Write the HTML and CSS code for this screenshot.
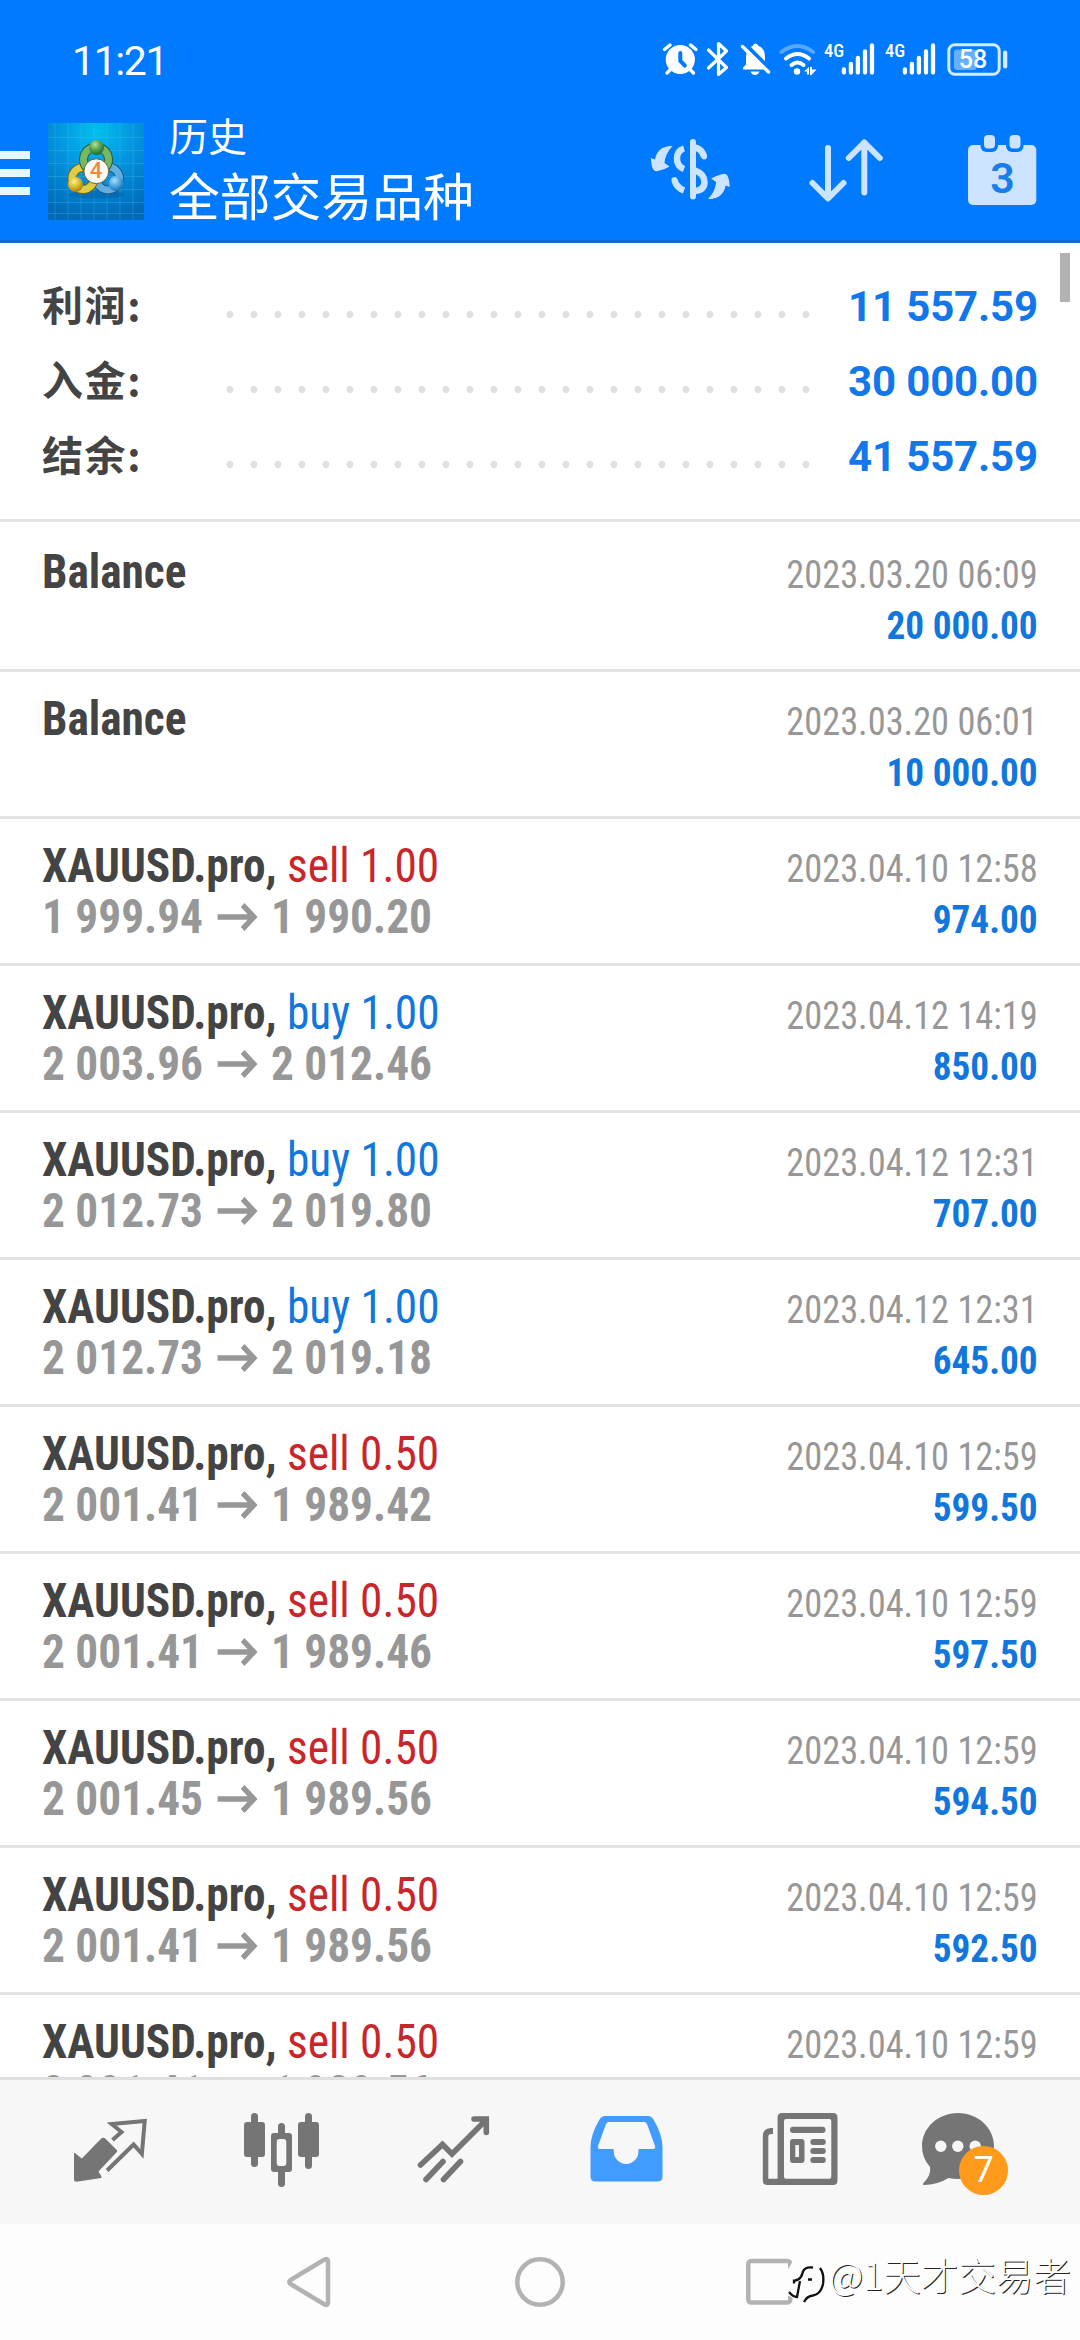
FILE: index.html
```html
<!DOCTYPE html>
<html lang="zh-CN">
<head>
<meta charset="utf-8">
<title>历史</title>
<link rel="stylesheet" href="styles.css">
</head>
<body>
<div class="screen">
  <header class="header">
    <div class="status">
      <span class="clock">11:21</span>
      <div class="status-icons">
        <svg width="44" height="44" viewBox="658 38 44 44"><circle cx="680.3" cy="59.5" r="14.6" fill="#fff"/><path d="M664.500 49.500l5.500-4.500M696 49.500l-5.500-4.500M670 70l-3 3M690.500 70l3 3" stroke="#fff" stroke-width="3.400" stroke-linecap="round"/><path d="M680.300 53v8l4.500 4.500" stroke="#007aff" stroke-width="4" fill="none" stroke-linecap="round"/></svg>
        <svg width="32" height="44" viewBox="702 38 32 44"><path d="M708.500 50l18 17.500-8 7v-31l8 7.500-18 17" fill="none" stroke="#fff" stroke-width="3.200" stroke-linejoin="round" stroke-linecap="round"/></svg>
        <svg width="42" height="44" viewBox="734 38 42 44"><path d="M743 69.500v-2l3-3v-7q0-9.500 6.500-11.500 1-2.500 3-2.500t3 2.500q6.500 2 6.500 11.500v7l4 5z" fill="#fff"/><path d="M750.500 71.500h9q-1.500 3.500-4.500 3.500t-4.500-3.500z" fill="#fff"/><path d="M744.500 43.500l25.500 25.500" stroke="#007aff" stroke-width="4"/><path d="M742.500 46.500l26 25.500" stroke="#fff" stroke-width="3.400" stroke-linecap="round"/></svg>
        <svg width="44" height="44" viewBox="776 38 44 44"><g fill="none" stroke="#fff" stroke-linecap="round" stroke-width="4"><path d="M781.500 52q16-12 31.500 0" opacity=".35"/><path d="M786 58.500q11.500-9 23 0"/><path d="M791.500 65q6-5 12 0"/></g><circle cx="797" cy="71.500" r="3.200" fill="#fff"/><path d="M804 71.500l5-4.500v7.500h-2v-3zM810 67h2v2.500h4.500l-5 5.500h-1.500z" fill="#fff"/></svg>
        <div class="signal"><span class="net">4G</span><svg width="61" height="44" viewBox="820 38 61 44"><path d="M843.900 69.500v3M850.900 64v8.500M857.900 58v14.500M865 51.500v21M872 45.500v27" stroke="#fff" stroke-width="4.300" stroke-linecap="round"/></svg></div>
        <div class="signal"><span class="net">4G</span><svg width="61" height="44" viewBox="820 38 61 44"><path d="M843.900 69.500v3M850.900 64v8.500M857.900 58v14.500M865 51.500v21M872 45.500v27" stroke="#fff" stroke-width="4.300" stroke-linecap="round"/></svg></div>
        <div class="battery"><svg width="70" height="44" viewBox="942 38 70 44"><rect x="948.800" y="44.800" width="50.400" height="29.400" rx="6" fill="none" stroke="#d6ebff" stroke-width="3"/><rect x="954" y="49.500" width="22.500" height="20.500" rx="3" fill="#66afff"/><rect x="1003" y="50.500" width="4.300" height="18" rx="2" fill="#d6ebff"/></svg><span class="level">58</span></div>
      </div>
    </div>
    <div class="toolbar">
      <svg class="menu" width="48" height="100" viewBox="0 123 48 100"><path d="M0 151h30v8H0zM0 169h30v8H0zM0 187h30v8H0z" fill="#e6f8ff"/></svg>
      <div class="logo">
        <svg width="96" height="97" viewBox="48 122.500 96 97">
          <defs>
            <radialGradient id="sky" cx=".5" cy=".1" r=".9"><stop offset="0" stop-color="#00c0ef"/><stop offset=".45" stop-color="#0494df"/><stop offset="1" stop-color="#006ab8"/></radialGradient>
            <radialGradient id="gr" cx=".4" cy=".3" r=".8"><stop offset="0" stop-color="#b5df9c"/><stop offset=".5" stop-color="#4d9f4b"/><stop offset="1" stop-color="#155d2b"/></radialGradient>
            <radialGradient id="ye" cx=".4" cy=".3" r=".8"><stop offset="0" stop-color="#fff48a"/><stop offset=".6" stop-color="#cba91e"/><stop offset="1" stop-color="#8d6d0c"/></radialGradient>
            <radialGradient id="bl" cx=".4" cy=".3" r=".8"><stop offset="0" stop-color="#a6dcfa"/><stop offset=".6" stop-color="#3d97d4"/><stop offset="1" stop-color="#165c9d"/></radialGradient>
          </defs>
          <rect x="48" y="122" width="96" height="98" fill="url(#sky)"/>
          <path d="M55 122v98M68 122v98M81 122v98M94 122v98M107 122v98M120 122v98M133 122v98M48 137h96M48 150h96M48 163h96M48 176h96M48 189h96M48 202h96M48 213h96" stroke="#53c5ee" stroke-width=".7" opacity=".4"/>
          <ellipse cx="97" cy="194" rx="28" ry="4" fill="#07549a" opacity=".4"/>
          <g fill="none" stroke-linecap="round">
            <circle cx="108" cy="178" r="11.500" stroke="#165787" stroke-width="9"/><circle cx="108" cy="178" r="11.500" stroke="#62aede" stroke-width="7"/>
            <circle cx="83" cy="178" r="11" stroke="#766817" stroke-width="9"/><circle cx="83" cy="178" r="11" stroke="#dccc48" stroke-width="7"/>
            <circle cx="96" cy="159" r="12.500" stroke="#245e31" stroke-width="9"/><circle cx="96" cy="159" r="12.500" stroke="#77b765" stroke-width="7"/>
          </g>
          <circle cx="96.500" cy="147" r="7.500" fill="url(#gr)"/><circle cx="75.500" cy="184" r="7.500" fill="url(#ye)"/><circle cx="116" cy="183" r="7.500" fill="url(#bl)"/>
          <circle cx="96.300" cy="170.700" r="12.400" fill="#f9f9f4" stroke="#655f3c" stroke-width="1"/>
        </svg>
        <span class="four">4</span>
      </div>
      <div class="titles"><div class="title-small">历史</div><div class="title-big">全部交易品种</div></div>
      <div class="actions">
        <svg width="156" height="100" viewBox="612 123 156 100"><path d="M684 148.500Q677 150.500 677 158.500T684 169M674.500 180.500Q677 188 684 190.500M695 147.500Q702 149 704 156.500M695 170.500Q704.500 174 704.500 182T695 191" fill="none" stroke="#cce4ff" stroke-width="6.500"/><path d="M693 142v54.500M703.700 155l.3 1.500M674.500 180l.3 1" stroke="#cce4ff" stroke-width="6" stroke-linecap="round"/><path id="swap" d="M672.500 146C663 145.500 656.500 150.500 655 159.500L651 158q0 7 2 11 1.500 3 5 2 7-1.500 11.500-4.500l-5-3.500q.500-9 8-17z" fill="#cce4ff"/><use href="#swap" transform="rotate(180 690.300 172.500)"/></svg>
        <svg width="156" height="100" viewBox="768 123 156 100"><path d="M828 148v50M812.500 183l15.500 15.500 15.500-15.500M864.300 192.500v-50M848.800 158l15.500-15.500 15.500 15.500" fill="none" stroke="#cce4ff" stroke-width="6" stroke-linecap="round" stroke-linejoin="round"/></svg>
        <div class="calendar"><svg width="156" height="100" viewBox="924 123 156 100"><rect x="968" y="145" width="68.300" height="60" rx="5" fill="#cce4ff"/><rect x="980.500" y="132" width="17.500" height="20" rx="6" fill="#007aff"/><rect x="1006" y="132" width="17.500" height="20" rx="6" fill="#007aff"/><rect x="984" y="135" width="11" height="13.500" rx="4" fill="#cce4ff"/><rect x="1009.500" y="135" width="11" height="13.500" rx="4" fill="#cce4ff"/></svg><span class="day">3</span></div>
      </div>
    </div>
  </header>

  <main class="content">
    <i class="scrollbar"></i>
    <section class="summary">
      <div class="sum-row"><span class="sum-label">利润:</span><span class="dots"></span><span class="sum-value">11 557.59</span></div>
      <div class="sum-row"><span class="sum-label">入金:</span><span class="dots"></span><span class="sum-value">30 000.00</span></div>
      <div class="sum-row"><span class="sum-label">结余:</span><span class="dots"></span><span class="sum-value">41 557.59</span></div>
    </section>
    <section class="deals">
      <div class="deal"><div class="left"><div class="name">Balance</div></div><div class="right"><div class="date">2023.03.20 06:09</div><div class="amount">20 000.00</div></div></div>
      <div class="deal"><div class="left"><div class="name">Balance</div></div><div class="right"><div class="date">2023.03.20 06:01</div><div class="amount">10 000.00</div></div></div>
      <div class="deal"><div class="left"><div class="name">XAUUSD.pro, <span class="sell">sell 1.00</span></div><div class="prices">1 999.94<svg class="arrow" viewBox="0 0 42 28"><path d="M0 14h39M26.500 2l12 12-12 12"/></svg>1 990.20</div></div><div class="right"><div class="date">2023.04.10 12:58</div><div class="amount">974.00</div></div></div>
      <div class="deal"><div class="left"><div class="name">XAUUSD.pro, <span class="buy">buy 1.00</span></div><div class="prices">2 003.96<svg class="arrow" viewBox="0 0 42 28"><path d="M0 14h39M26.500 2l12 12-12 12"/></svg>2 012.46</div></div><div class="right"><div class="date">2023.04.12 14:19</div><div class="amount">850.00</div></div></div>
      <div class="deal"><div class="left"><div class="name">XAUUSD.pro, <span class="buy">buy 1.00</span></div><div class="prices">2 012.73<svg class="arrow" viewBox="0 0 42 28"><path d="M0 14h39M26.500 2l12 12-12 12"/></svg>2 019.80</div></div><div class="right"><div class="date">2023.04.12 12:31</div><div class="amount">707.00</div></div></div>
      <div class="deal"><div class="left"><div class="name">XAUUSD.pro, <span class="buy">buy 1.00</span></div><div class="prices">2 012.73<svg class="arrow" viewBox="0 0 42 28"><path d="M0 14h39M26.500 2l12 12-12 12"/></svg>2 019.18</div></div><div class="right"><div class="date">2023.04.12 12:31</div><div class="amount">645.00</div></div></div>
      <div class="deal"><div class="left"><div class="name">XAUUSD.pro, <span class="sell">sell 0.50</span></div><div class="prices">2 001.41<svg class="arrow" viewBox="0 0 42 28"><path d="M0 14h39M26.500 2l12 12-12 12"/></svg>1 989.42</div></div><div class="right"><div class="date">2023.04.10 12:59</div><div class="amount">599.50</div></div></div>
      <div class="deal"><div class="left"><div class="name">XAUUSD.pro, <span class="sell">sell 0.50</span></div><div class="prices">2 001.41<svg class="arrow" viewBox="0 0 42 28"><path d="M0 14h39M26.500 2l12 12-12 12"/></svg>1 989.46</div></div><div class="right"><div class="date">2023.04.10 12:59</div><div class="amount">597.50</div></div></div>
      <div class="deal"><div class="left"><div class="name">XAUUSD.pro, <span class="sell">sell 0.50</span></div><div class="prices">2 001.45<svg class="arrow" viewBox="0 0 42 28"><path d="M0 14h39M26.500 2l12 12-12 12"/></svg>1 989.56</div></div><div class="right"><div class="date">2023.04.10 12:59</div><div class="amount">594.50</div></div></div>
      <div class="deal"><div class="left"><div class="name">XAUUSD.pro, <span class="sell">sell 0.50</span></div><div class="prices">2 001.41<svg class="arrow" viewBox="0 0 42 28"><path d="M0 14h39M26.500 2l12 12-12 12"/></svg>1 989.56</div></div><div class="right"><div class="date">2023.04.10 12:59</div><div class="amount">592.50</div></div></div>
      <div class="deal"><div class="left"><div class="name">XAUUSD.pro, <span class="sell">sell 0.50</span></div><div class="prices">2 001.41<svg class="arrow" viewBox="0 0 42 28"><path d="M0 14h39M26.500 2l12 12-12 12"/></svg>1 989.56</div></div><div class="right"><div class="date">2023.04.10 12:59</div></div></div>
    </section>
  </main>

  <nav class="tabs">
    <svg viewBox="24 2080 172 144"><path d="M74 2153.500q.5-1 1.500 0l6.300 5 19-19.500q2.500-2.500 5 0l11 11q1 1 0 2L98.500 2171.500l3 5q.3 1-.5 1.500l-24.500 3.700q-2.500 0-2.500-2z" fill="#757575"/><path d="M112.500 2140l9-8-9.800-8 33-3-2.800 33-8.300-9.500-26.500 26" fill="none" stroke="#757575" stroke-width="4"/></svg>
    <svg viewBox="196 2080 172 144"><g fill="#757575"><rect x="244" y="2122" width="21" height="35" rx="3"/><rect x="251" y="2113" width="7" height="54" rx="3.500"/><rect x="278" y="2123" width="7" height="64" rx="3.500"/><rect x="271" y="2133" width="21" height="39" rx="3"/><rect x="298" y="2122" width="21" height="35" rx="3"/><rect x="305" y="2113" width="7" height="56" rx="3.500"/></g><rect x="276.700" y="2139" width="9.600" height="27" rx="3" fill="#f7f7f7"/></svg>
    <svg viewBox="368 2080 172 144"><path d="M420.500 2165l22-20.500 9.500 9.500 34-34M474 2119h12.300v13.500M426 2179.500l17-18M443.500 2179.500l17-18" fill="none" stroke="#757575" stroke-width="5.600" stroke-linecap="round" stroke-linejoin="miter"/></svg>
    <svg viewBox="540 2080 172 144"><path fill-rule="evenodd" d="M605 2116h43q3.500 0 5.500 3.500 9 15 9 28v29q0 5-5 5h-62q-5 0-5-5v-29q0-13 9-28 2-3.500 5.500-3.500zM609 2122q-2 0-3 2l-8 22q-.8 3 2 3h13.700v2.500a12.400 12.400 0 0 0 24.800 0V2149h14.500q2.800 0 2-3l-8-22q-1-2-3-2z" fill="#429bff"/></svg>
    <svg viewBox="712 2080 172 144"><path fill-rule="evenodd" d="M782 2113h51q4.500 0 4.500 4.500v63q0 4.500-4.500 4.500h-65.500q-4.700 0-4.700-4.500V2136q0-7.500 8-8h2.200v6h-1.700q-3 0-3 3v41.700h9.300V2117.500q0-4.500 4.400-4.500zM786 2119q-2 0-2 2v55.700q0 2 2 2h43.300q2 0 2-2V2121q0-2-2-2z" fill="#757575"/><g fill="#757575"><rect x="790" y="2126.700" width="35.500" height="6.300" rx="3"/><rect x="810.300" y="2139" width="15.500" height="6" rx="3"/><rect x="810.300" y="2148" width="15.500" height="6" rx="3"/><rect x="810.300" y="2157" width="15.500" height="6" rx="3"/><path fill-rule="evenodd" d="M793 2139h8.500q3 0 3 3v18q0 3-3 3H793q-3 0-3-3v-18q0-3 3-3zm2.300 6v12h3.700v-12z"/></g></svg>
    <div class="chat"><svg viewBox="884 2080 172 144"><path d="M958 2113c20 0 36 15 36 33s-16 33-36 33q-5 0-9.500-1Q937 2185 924 2185q-2-.3-.5-2 8-8 6.500-16-8-9-8-21c0-18 16-33 36-33z" fill="#757575"/><g fill="#f7f7f7"><circle cx="940.800" cy="2146.300" r="5.700"/><circle cx="957.800" cy="2146.300" r="5.700"/><circle cx="975.200" cy="2146.300" r="5.700"/></g></svg><span class="badge">7</span></div>
  </nav>

  <footer class="system">
    <svg viewBox="195 2224 230 116"><path d="M324.500 2259.500L290.500 2280q-2.500 2 0 4L324.500 2304.500q3.500 1.500 3.500-2V2261.500q0-3.500-3.500-2z"/></svg>
    <svg viewBox="425 2224 230 116"><circle cx="540" cy="2282" r="22.700"/></svg>
    <svg viewBox="655 2224 230 116"><rect x="748.300" y="2261" width="42" height="41.500" rx="3"/></svg>
    <div class="watermark"><svg width="41" height="46" viewBox="786 2259 41 46"><path d="M793 2261h27l5 8v20l-12 14h-8l-18-8v-24z" fill="#fdfdfd" stroke="none"/><path class="ink" d="M813 2267.500q-8-1-10 4-1.500 8-8 9M794 2279.500v4M800 2281l-3 16q-4 0-8-5M808 2279.500h4"/><path class="ink" d="M820 2268q4.500 6 3 16-2 10-10 11.500-6 .5-9 6.500"/></svg><span>@1天才交易者</span></div>
  </footer>
</div>
</body>
</html>
```
FILE: styles.css
```css
* { box-sizing: border-box; }
body { margin: 0; background: #fff; }
svg { display: block; flex: none; }

.screen {
  display: flex;
  flex-direction: column;
  width: 1080px;
  height: 2340px;
  overflow: hidden;
  font-family: Roboto, "Noto Sans CJK SC", sans-serif;
}

.header { height: 243px; flex: none; background: #007aff; border-bottom: 3px solid #1268c8; color: #fff; }
.status { display: flex; justify-content: space-between; height: 123px; padding: 38px 68px 0 72px; }
.clock { font-size: 41px; line-height: 46px; font-weight: 450; letter-spacing: -1.400px; }
.status-icons { display: flex; height: 44px; }
.signal, .battery, .calendar, .logo, .chat { position: relative; }
.net { position: absolute; left: 4px; top: 4px; font: 500 18.500px/18px "Roboto Condensed", Roboto, sans-serif; }
.level { position: absolute; left: 5px; top: 6px; width: 52px; text-align: center; font-size: 25px; line-height: 31px; font-weight: 500; }

.toolbar { display: flex; height: 100px; }
.four { position: absolute; left: 0; top: 33px; width: 96px; text-align: center; font: 500 22px/30px Roboto, sans-serif; color: #ef8a3c; }
.titles { width: 468px; padding-left: 25px; font-family: "Noto Sans CJK SC", sans-serif; white-space: nowrap; color: #fff; }
.title-small { margin-top: -14px; font-size: 39px; line-height: 50px; }
.title-big { margin-top: 5px; font-size: 50.800px; line-height: 60px; }
.actions { display: flex; }
.day { position: absolute; left: 0; top: 29px; width: 157px; text-align: center; font-size: 43px; line-height: 52px; font-weight: 600; color: #1a7ee8; }

.content { position: relative; height: 1834px; flex: none; overflow: hidden; background: #fff; }
.scrollbar { position: absolute; right: 10px; top: 10px; width: 10px; height: 49px; background: #b2b2b2; }
.summary { height: 279px; padding: 26px 42px 0; border-bottom: 3px solid #e3e3e3; }
.sum-row { display: flex; height: 75px; line-height: 75px; }
.sum-label { width: 176px; margin-top: -3px; font-family: "Noto Sans CJK SC", sans-serif; font-size: 41px; font-weight: 700; letter-spacing: 1.600px; color: #444; }
.dots { width: 600px; height: 7px; margin-top: 42px; background: radial-gradient(circle, #e0e0e0 3.200px, transparent 3.800px) 0 0 / 24px 7px; }
.sum-value { flex: 1; display: flex; justify-content: flex-end; font-size: 42px; font-weight: 700; letter-spacing: -.150px; color: #1177ea; white-space: nowrap; }

.deals { padding-top: 3px; font-family: "Roboto Condensed", Roboto, sans-serif; }
.deal { display: flex; justify-content: space-between; height: 147px; padding: 21px 42px 0; border-bottom: 3px solid #e3e3e3; line-height: 51px; white-space: nowrap; }
.left { transform: scaleX(.944); transform-origin: left; }
.name { font-size: 48px; font-weight: 700; color: #444; }
.sell, .buy { font-weight: 400; }
.sell { color: #c8262b; }
.buy { color: #1177dd; }
.prices { display: flex; align-items: center; font-size: 48px; font-weight: 700; color: #979797; }
.arrow { width: 44px; height: 28px; margin: 0 14px; }
.arrow path { fill: none; stroke: #979797; stroke-width: 5.500; }
.right { padding-top: 4px; text-align: right; font-size: 39px; }
.date { color: #979797; transform: scaleX(.932); transform-origin: right; }
.amount { font-weight: 700; color: #1177dd; transform: scaleX(.955); transform-origin: right; }

.tabs { display: flex; flex: none; height: 147px; padding: 0 24px; background: #f7f7f7; border-top: 3px solid #e0e0e0; }
.tabs svg { width: 172px; height: 144px; }
.badge { position: absolute; left: 75px; top: 65.500px; width: 49px; height: 49px; border-radius: 50%; background: #ff9a1a; color: #fff; font-size: 36px; line-height: 49px; text-align: center; }

.system { position: relative; display: flex; flex: none; height: 116px; padding: 0 195px; background: #fdfdfd; }
.system svg { width: 230px; height: 116px; fill: none; stroke: #b2b2b2; stroke-width: 4.500; }
.watermark { position: absolute; left: 786px; top: 35px; display: flex; }
.system .watermark svg { width: 41px; height: 46px; }
.system .watermark .ink { stroke: #111; stroke-width: 2.300; }
.watermark span { margin: -10px 0 0 2px; font: 300 37.500px/50px "Noto Sans CJK SC", sans-serif; color: #fdfdfd; text-shadow: 1px 1px 0 #222; white-space: nowrap; }
```
